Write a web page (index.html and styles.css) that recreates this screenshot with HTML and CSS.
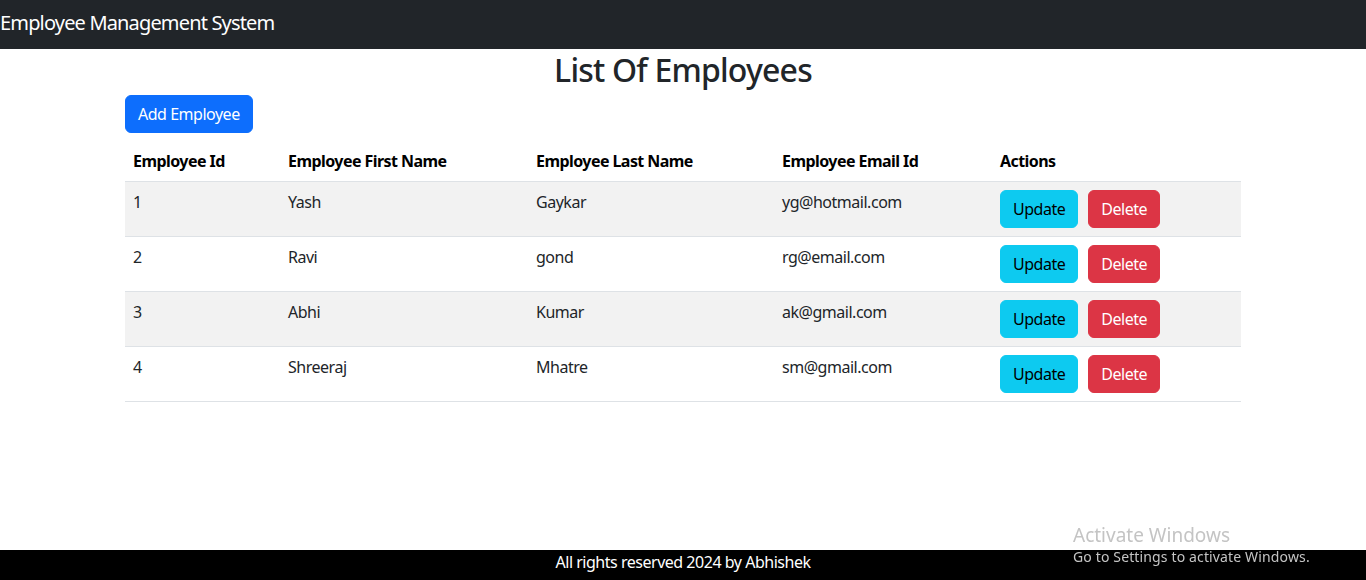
FILE: index.html
```html
<!DOCTYPE html>
<html lang="en">
<head>
<meta charset="utf-8">
<title>Employee Management System</title>
<link rel="stylesheet" href="styles.css">
</head>
<body>
<div class="page">
  <header class="navbar">
    <a class="brand" href="#">Employee Management System</a>
  </header>
  <main class="main">
    <div class="container">
      <h2 class="title">List Of Employees</h2>
      <div class="toolbar">
        <button class="btn btn-primary">Add Employee</button>
      </div>
      <table class="table">
        <colgroup>
          <col class="c1"><col class="c2"><col class="c3"><col class="c4"><col class="c5">
        </colgroup>
        <thead>
          <tr>
            <th>Employee Id</th>
            <th>Employee First Name</th>
            <th>Employee Last Name</th>
            <th>Employee Email Id</th>
            <th>Actions</th>
          </tr>
        </thead>
        <tbody>
          <tr class="odd">
            <td>1</td><td>Yash</td><td>Gaykar</td><td>yg@hotmail.com</td>
            <td><button class="btn btn-info">Update</button><button class="btn btn-danger">Delete</button></td>
          </tr>
          <tr>
            <td>2</td><td>Ravi</td><td>gond</td><td>rg@email.com</td>
            <td><button class="btn btn-info">Update</button><button class="btn btn-danger">Delete</button></td>
          </tr>
          <tr class="odd">
            <td>3</td><td>Abhi</td><td>Kumar</td><td>ak@gmail.com</td>
            <td><button class="btn btn-info">Update</button><button class="btn btn-danger">Delete</button></td>
          </tr>
          <tr>
            <td>4</td><td>Shreeraj</td><td>Mhatre</td><td>sm@gmail.com</td>
            <td><button class="btn btn-info">Update</button><button class="btn btn-danger">Delete</button></td>
          </tr>
        </tbody>
      </table>
    </div>
  </main>
  <footer class="footer">All rights reserved 2024 by Abhishek</footer>
</div>
<div class="watermark">
  <div class="wm-title">Activate Windows</div>
  <div class="wm-sub">Go to Settings to activate Windows.</div>
</div>
</body>
</html>
```
FILE: styles.css
```css
* { box-sizing: border-box; }
html, body { margin: 0; padding: 0; }
body {
  font-family: "Noto Sans", "Open Sans", sans-serif;
  font-size: 16px;
  line-height: 1.5;
  letter-spacing: -0.03em;
  color: #212529;
  background: #fff;
}
.page {
  display: flex;
  flex-direction: column;
  min-height: 100vh;
}
.navbar {
  background: #212529;
  height: 49px;
  display: flex;
  align-items: center;
  padding-bottom: 4px;
}
.brand {
  color: #fff;
  font-size: 20px;
  text-decoration: none;
  line-height: 30px;
  letter-spacing: -0.042em;
}
.main { flex: 1; }
.container {
  width: 1140px;
  margin: 0 auto;
  padding: 0 12px;
}
.title {
  text-align: center;
  font-size: 32px;
  font-weight: 500;
  line-height: 1.2;
  margin: 2px 0 6px;
  letter-spacing: -0.025em;
}
.toolbar { margin-bottom: 8px; }
.btn {
  display: inline-block;
  font-family: inherit;
  font-size: 16px;
  line-height: 24px;
  letter-spacing: -0.03em;
  padding: 6px 12px;
  border: 1px solid transparent;
  border-radius: 6px;
  cursor: pointer;
}
.btn-primary { background: #0d6efd; border-color: #0d6efd; color: #fff; }
.btn-info { background: #0dcaf0; border-color: #0dcaf0; color: #000; }
.btn-danger { background: #dc3545; border-color: #dc3545; color: #fff; margin-left: 10px; }
.table {
  width: 100%;
  border-collapse: collapse;
  table-layout: fixed;
  margin-bottom: 16px;
}
.c1 { width: 155px; }
.c2 { width: 248px; }
.c3 { width: 246px; }
.c4 { width: 218px; }
.c5 { width: 249px; }
.table th, .table td {
  padding: 8px;
  text-align: left;
  vertical-align: top;
  border-bottom: 1px solid #dee2e6;
}
.table th { font-weight: 700; color: #000; letter-spacing: -0.035em; }
.table tr.odd td { background: #f2f2f2; }
.footer {
  background: #000;
  color: #fff;
  height: 30px;
  line-height: 24px;
  text-align: center;
}
.watermark {
  position: fixed;
  left: 1073px;
  top: 524px;
  color: #c4c4c4;
  pointer-events: none;
  line-height: 1.2;
  letter-spacing: 0;
}
.wm-title { font-size: 19px; }
.wm-sub { font-size: 14px; margin-top: 2px; letter-spacing: 0.01em; }
```
